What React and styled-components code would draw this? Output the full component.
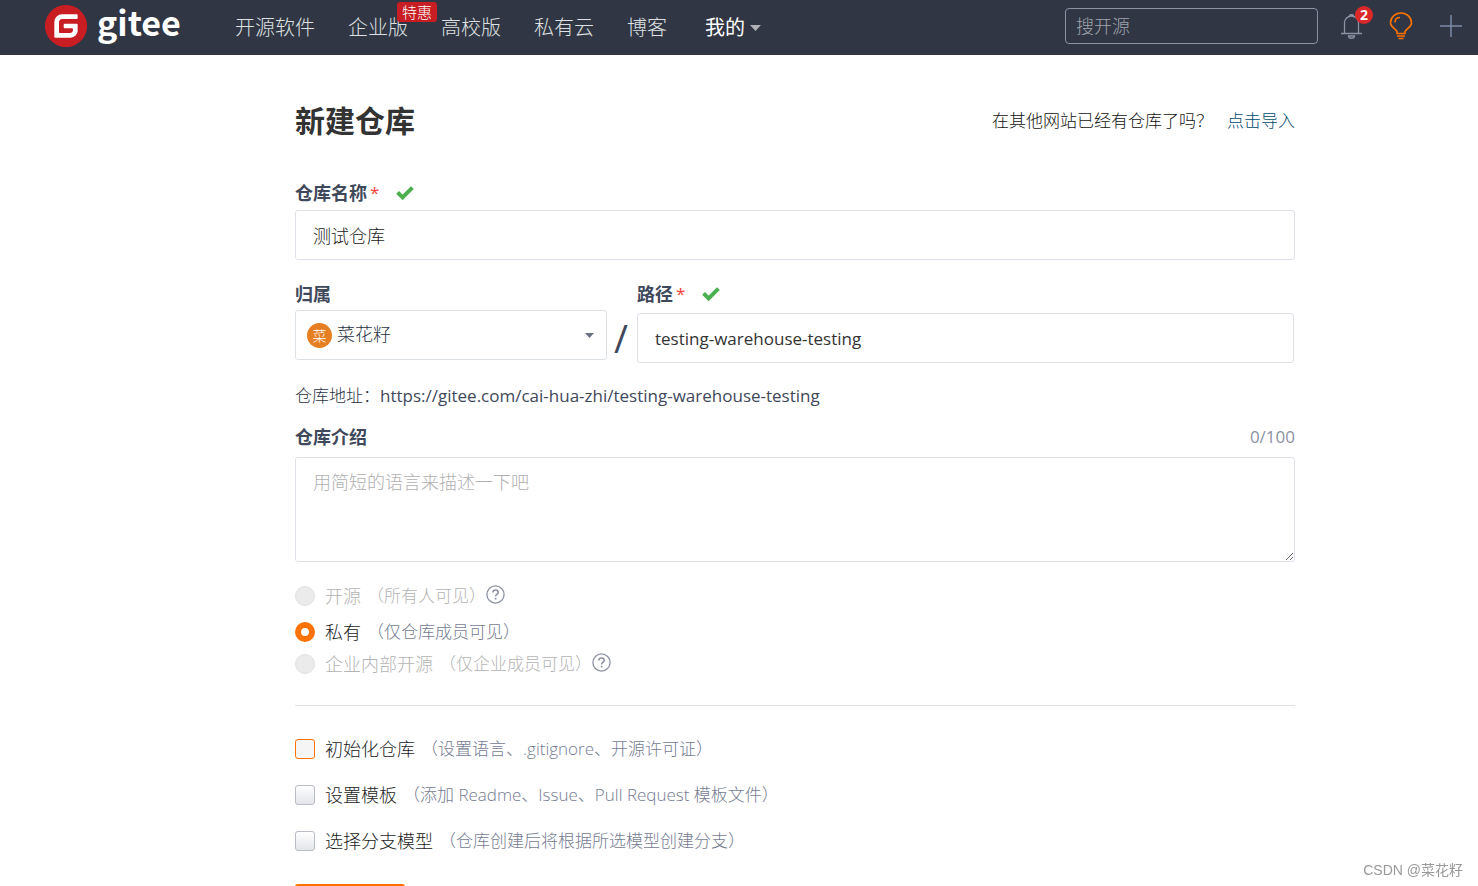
import React from 'react';
import styled, { createGlobalStyle } from 'styled-components';
import { SiGitee } from 'react-icons/si';

const GlobalStyle = createGlobalStyle`
    * {
        box-sizing: border-box;
    }
    body {
        margin: 0;
        background: #fff;
        color: #40485b;
        font-family: "Open Sans", "Noto Sans CJK SC", sans-serif;
        font-size: 18px;
        font-weight: 300;
        line-height: 24px;
        scrollbar-width: none;
    }
    input, select, textarea, button {
        font: inherit;
        color: inherit;
        margin: 0;
    }
    a {
        text-decoration: none;
    }
`;

const Header = styled.header`
    height: 55px;
    padding: 0 16px 3px 45px;
    display: flex;
    align-items: center;
    background: #303643;
`;

const Logo = styled.a`
    width: 190px;
    display: flex;
    align-items: center;
    gap: 10px;
    color: #fff;
    font-family: "Noto Sans CJK SC", sans-serif;
    font-size: 34px;
    font-weight: 700;
    line-height: 34px;
    span {
        padding-bottom: 8px;
    }
`;

const LogoMark = styled(SiGitee)`
    flex: none;
    width: 42px;
    height: 42px;
    border-radius: 50%;
    background: radial-gradient(#fff 60%, #c71d23 61%);
    color: #c71d23;
`;

const Nav = styled.nav`
    display: flex;
    align-items: center;
    gap: 33px;
    flex-grow: 1;
    padding-top: 4px;
    font-size: 20px;
    line-height: 28px;
`;

const NavLink = styled.a`
    position: relative;
    white-space: nowrap;
    color: #dfe0e2;
`;

const NavMenu = styled.button`
    display: flex;
    align-items: center;
    gap: 5px;
    margin-left: 5px;
    padding: 0;
    border: 0;
    background: none;
    color: #fff;
    font-weight: 400;
`;

const Promo = styled.span`
    position: absolute;
    left: 49px;
    top: -12px;
    padding: 0 5px;
    border-radius: 3px;
    background: #c71d23;
    color: #fff;
    font-size: 15px;
    line-height: 20px;
`;

const Search = styled.input`
    width: 253px;
    height: 36px;
    padding: 0 10px;
    border: 1px solid #8c92a4;
    border-radius: 4px;
    background: transparent;
    color: #fff;
    &::placeholder {
        color: #a0a4ad;
    }
`;

const Tools = styled.div`
    display: flex;
    align-items: center;
    gap: 27px;
    margin-left: 23px;
`;

const Tool = styled.button`
    position: relative;
    display: flex;
    padding: 0;
    border: 0;
    background: none;
    color: ${props => props.$color};
`;

const Count = styled.span`
    position: absolute;
    right: -11px;
    top: -8px;
    width: 18px;
    height: 18px;
    border-radius: 50%;
    background: #db2828;
    color: #fff;
    font-size: 14px;
    font-weight: 700;
    line-height: 18px;
    text-align: center;
`;

const Main = styled.main`
    padding: 46px 183px 40px 295px;
`;

const TitleRow = styled.div`
    display: flex;
    justify-content: space-between;
    align-items: center;
    margin-bottom: 40px;
    color: #333;
`;

const Title = styled.h1`
    margin: 0;
    font-size: 30px;
    font-weight: 700;
    line-height: 40px;
`;

const ImportTip = styled.div`
    display: flex;
    gap: 14px;
    color: #111;
    font-size: 17px;
    a {
        color: #004a6b;
    }
`;

const LabelRow = styled.div`
    display: flex;
    justify-content: space-between;
    align-items: center;
    height: 24px;
    margin-bottom: ${props => props.$gap || 5}px;
`;

const Label = styled.label`
    display: flex;
    align-items: center;
    font-weight: 700;
`;

const Star = styled.span`
    margin: 0 17px 0 3px;
    color: #f44336;
    font-size: 17px;
    font-weight: 400;
`;

const Field = styled.input`
    display: block;
    width: 100%;
    height: 50px;
    padding: 1px 17px;
    border: 1px solid #dfe1e9;
    border-radius: 3px;
    background: #fff;
    color: #222;
`;

const PathField = styled(Field)`
    color: #333;
    font-size: 17px;
    font-weight: 400;
`;

const PathRow = styled.div`
    display: flex;
    align-items: flex-start;
    margin: 22px 1px 21px 0;
`;

const Owner = styled.div`
    width: 312px;
`;

const Path = styled.div`
    flex-grow: 1;
`;

const Slash = styled.span`
    width: 28px;
    margin-right: 2px;
    padding-top: 36px;
    font-size: 38px;
    font-weight: 400;
    line-height: 40px;
    text-align: center;
`;

const SelectBox = styled.div`
    position: relative;
    svg {
        position: absolute;
        right: 13px;
        top: 23px;
        pointer-events: none;
    }
`;

const Select = styled.select`
    appearance: none;
    display: block;
    width: 100%;
    height: 50px;
    padding: 0 40px 2px 41px;
    border: 1px solid #dce1e6;
    border-radius: 3px;
    background: #fff;
    color: #2b3245;
`;

const Avatar = styled.span`
    position: absolute;
    left: 12px;
    top: 13px;
    width: 25px;
    height: 25px;
    border-radius: 50%;
    background: #e67e22;
    color: #fff;
    font-size: 14px;
    line-height: 25px;
    text-align: center;
    pointer-events: none;
`;

const Address = styled.div`
    display: flex;
    margin-bottom: 17px;
    color: #2b3245;
    font-size: 17px;
`;

const Url = styled.span`
    color: #40485b;
    font-weight: 400;
`;

const Counter = styled.span`
    color: #8c92a4;
    font-size: 17px;
    font-weight: 400;
`;

const Intro = styled.textarea`
    display: block;
    width: 100%;
    height: 105px;
    padding: 12px 17px;
    border: 1px solid #dfe1e9;
    border-radius: 3px;
    resize: vertical;
    &::placeholder {
        color: #b0b0b0;
    }
`;

const Radios = styled.div`
    display: grid;
    grid-template-rows: 36px 36px 28px;
    align-items: center;
    padding: 16px 0 27px;
    border-bottom: 1px solid #dfe1e3;
`;

const Checks = styled.div`
    display: grid;
    gap: 22px;
    padding: 31px 0 31px;
`;

const Option = styled.div`
    display: flex;
    align-items: center;
    label {
        display: flex;
        align-items: center;
        color: ${props => props.$disabled ? '#b4b4b4' : '#1c1c1c'};
    }
`;

const Hint = styled.span`
    margin-left: 6px;
    color: ${props => props.$disabled ? '#b4b4b4' : '#757c92'};
    font-size: 17px;
`;

const Radio = styled.input`
    appearance: none;
    flex: none;
    width: 20px;
    height: 20px;
    margin-right: 10px;
    border: 1px solid #e2e2e2;
    border-radius: 50%;
    background: #ebebeb;
    &:checked {
        border: 6px solid #fe7300;
        background: #fff;
    }
`;

const Checkbox = styled.input`
    appearance: none;
    flex: none;
    width: 20px;
    height: 20px;
    margin-right: 10px;
    border: 1px solid ${props => props.$active ? '#fe7300' : '#b9bdc6'};
    border-radius: 3px;
    background: ${props => props.$active ? '#f5f5f5' : 'linear-gradient(#fff, #e3e5e9)'};
`;

const HelpLink = styled.a`
    display: flex;
    padding-bottom: 3px;
    color: #8c92a4;
`;

const Submit = styled.button`
    display: block;
    width: 110px;
    height: 48px;
    border: 0;
    border-radius: 3px;
    background: #fe7300;
    color: #fff;
`;

const Watermark = styled.div`
    position: fixed;
    right: 15px;
    bottom: 4px;
    color: #999;
    font-family: "Liberation Sans", "Noto Sans CJK SC", sans-serif;
    font-size: 14px;
    font-weight: 400;
`;

const Caret = () => (
    <svg width="11" height="6" viewBox="0 0 11 6" aria-hidden="true">
        <path d="M0 0h11L5.5 6z" fill="#b0b2b7" />
    </svg>
);

const SelectCaret = () => (
    <svg width="9" height="5" viewBox="0 0 9 5" aria-hidden="true">
        <path d="M0 0h9L4.5 5z" fill="#6b7285" />
    </svg>
);

const Check = () => (
    <svg width="18" height="16" viewBox="0 0 18 16" aria-hidden="true">
        <path d="M1.6 7.4l5 5L16.4 2.7" fill="none" stroke="#4caf50" strokeWidth="4" />
    </svg>
);

const Bell = () => (
    <svg width="21" height="25" viewBox="0 0 21 25" fill="none" stroke="currentColor" aria-hidden="true">
        <path d="M0 19.5h21M3.5 19V9a7 7 0 0 1 14 0v10M8.5 2.500a2 2 0 0 1 4 0M7.500 22h6c0 3-6 3-6 0z" strokeWidth="1.3" />
    </svg>
);

const Bulb = () => (
    <svg width="24" height="28" viewBox="0 0 24 28" fill="none" stroke="currentColor" aria-hidden="true">
        <path d="M8 21.5v-2C6.500 16.500 1.5 15 1.5 11a10.5 10 0 0 1 21 0c0 4-5 5.500-6.500 8.500v2zM6 10.500c0-3 2-5 5-5" strokeWidth="1.6" />
        <path d="M8 24h8M9.500 26.500h5" strokeWidth="1.600" />
    </svg>
);

const Plus = () => (
    <svg width="22" height="22" viewBox="0 0 22 22" fill="none" stroke="currentColor" aria-hidden="true">
        <path d="M11 0v22M0 11h22" strokeWidth="1.5" />
    </svg>
);

const Help = () => (
    <svg width="19" height="19" viewBox="0 0 19 19" fill="none" stroke="currentColor" aria-hidden="true">
        <circle cx="9.5" cy="9.5" r="8.600" strokeWidth="1.300" />
        <path d="M6.900 7.500c0-3.300 5.300-3.300 5.300 0 0 1.700-2.600 1.700-2.600 4" strokeWidth="1.600" />
        <path d="M9.600 12.800v1.700" strokeWidth="1.700" />
    </svg>
);

const links = ['开源软件', '企业版', '高校版', '私有云', '博客'];

const visibility = [
    { id: 'public', name: '开源', hint: '（所有人可见）', disabled: true, help: true },
    { id: 'private', name: '私有', hint: '（仅仓库成员可见）' },
    { id: 'inner', name: '企业内部开源', hint: '（仅企业成员可见）', disabled: true, help: true },
];

const settings = [
    { id: 'init', name: '初始化仓库', hint: '（设置语言、.gitignore、开源许可证）', active: true },
    { id: 'template', name: '设置模板', hint: '（添加 Readme、Issue、Pull Request 模板文件）' },
    { id: 'branch', name: '选择分支模型', hint: '（仓库创建后将根据所选模型创建分支）' },
];

function TopBar() {
    return (
        <Header>
            <Logo href="#"><LogoMark /><span>gitee</span></Logo>
            <Nav>
                {links.map(link => (
                    <NavLink href="#" key={link}>
                        {link}
                        {link === '企业版' && <Promo>特惠</Promo>}
                    </NavLink>
                ))}
                <NavMenu type="button">我的<Caret /></NavMenu>
            </Nav>
            <Search placeholder="搜开源" aria-label="搜开源" />
            <Tools>
                <Tool type="button" $color="#8c92a4" aria-label="通知"><Bell /><Count>2</Count></Tool>
                <Tool type="button" $color="#fe7300" aria-label="提示"><Bulb /></Tool>
                <Tool type="button" $color="#7a8ba8" aria-label="新建"><Plus /></Tool>
            </Tools>
        </Header>
    )
}

function App() {
    return (
        <>
            <GlobalStyle />
            <TopBar />
            <Main>
                <TitleRow>
                    <Title>新建仓库</Title>
                    <ImportTip>在其他网站已经有仓库了吗？<a href="#">点击导入</a></ImportTip>
                </TitleRow>
                <LabelRow>
                    <Label htmlFor="name">仓库名称<Star>*</Star><Check /></Label>
                </LabelRow>
                <Field id="name" defaultValue="测试仓库" />
                <PathRow>
                    <Owner>
                        <LabelRow $gap={4}>
                            <Label htmlFor="owner">归属</Label>
                        </LabelRow>
                        <SelectBox>
                            <Select id="owner">
                                <option>菜花籽</option>
                            </Select>
                            <Avatar>菜</Avatar>
                            <SelectCaret />
                        </SelectBox>
                    </Owner>
                    <Slash>/</Slash>
                    <Path>
                        <LabelRow $gap={7}>
                            <Label htmlFor="path">路径<Star>*</Star><Check /></Label>
                        </LabelRow>
                        <PathField id="path" defaultValue="testing-warehouse-testing" />
                    </Path>
                </PathRow>
                <Address>
                    仓库地址：
                    <Url>https://gitee.com/cai-hua-zhi/testing-warehouse-testing</Url>
                </Address>
                <LabelRow $gap={8}>
                    <Label htmlFor="intro">仓库介绍</Label>
                    <Counter>0/100</Counter>
                </LabelRow>
                <Intro id="intro" placeholder="用简短的语言来描述一下吧" />
                <Radios>
                    {visibility.map(({ id, name, hint, disabled, help }) => (
                        <Option key={id} $disabled={disabled}>
                            <label>
                                <Radio type="radio" name="visibility" disabled={disabled} defaultChecked={id === 'private'} />
                                {name}
                                <Hint $disabled={disabled}>{hint}</Hint>
                            </label>
                            {help && <HelpLink href="#" aria-label="帮助"><Help /></HelpLink>}
                        </Option>
                    ))}
                </Radios>
                <Checks>
                    {settings.map(({ id, name, hint, active }) => (
                        <Option key={id}>
                            <label>
                                <Checkbox type="checkbox" $active={active} />
                                {name}
                                <Hint>{hint}</Hint>
                            </label>
                        </Option>
                    ))}
                </Checks>
                <Submit type="submit" aria-label="创建" />
            </Main>
            <Watermark>CSDN @菜花籽</Watermark>
        </>
    )
}

export default App;
